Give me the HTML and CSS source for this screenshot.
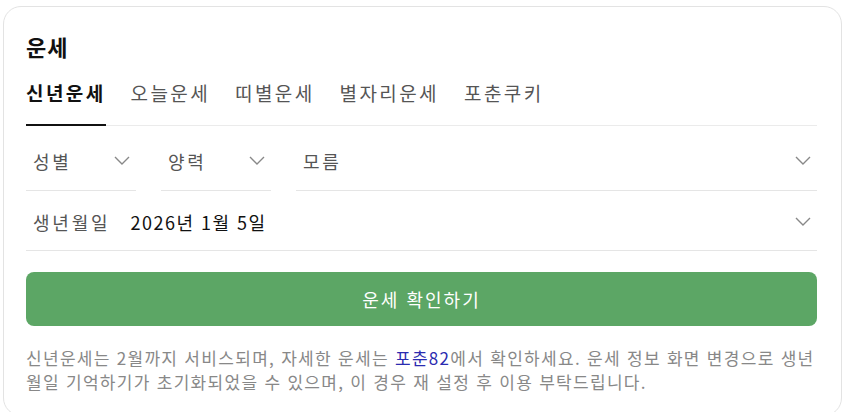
FILE: index.html
```html
<!DOCTYPE html>
<html lang="ko">
<head>
<meta charset="utf-8">
<link rel="stylesheet" href="styles.css">
</head>
<body>
<section class="card">
  <h2 class="title">운세</h2>
  <nav class="tabs">
    <a class="tab active">신년운세</a>
    <a class="tab">오늘운세</a>
    <a class="tab">띠별운세</a>
    <a class="tab">별자리운세</a>
    <a class="tab">포춘쿠키</a>
  </nav>
  <div class="row selects">
    <div class="select short"><span class="label">성별</span><svg class="chev" viewBox="0 0 16 9"><path d="M1 1l7 7 7-7"/></svg></div>
    <div class="select short"><span class="label">양력</span><svg class="chev" viewBox="0 0 16 9"><path d="M1 1l7 7 7-7"/></svg></div>
    <div class="select wide"><span class="label">모름</span><svg class="chev" viewBox="0 0 16 9"><path d="M1 1l7 7 7-7"/></svg></div>
  </div>
  <div class="row birth">
    <div class="select wide"><span class="label">생년월일</span><span class="value">2026년 1월 5일</span><svg class="chev" viewBox="0 0 16 9"><path d="M1 1l7 7 7-7"/></svg></div>
  </div>
  <button class="btn">운세 확인하기</button>
  <p class="note">신년운세는 2월까지 서비스되며, 자세한 운세는 <a class="link">포춘82</a>에서 확인하세요. 운세 정보 화면 변경으로 생년월일 기억하기가 초기화되었을 수 있으며, 이 경우 재 설정 후 이용 부탁드립니다.</p>
</section>
</body>
</html>
```

FILE: styles.css
```css
html, body {
  margin: 0;
  padding: 0;
  background: #fff;
}
body {
  font-family: "Noto Sans CJK KR", "Noto Sans", sans-serif;
  color: #222;
}
.card {
  box-sizing: border-box;
  margin: 6px 0 0 3px;
  width: 839px;
  height: 410px;
  border: 1px solid #e3e3e3;
  border-radius: 18px;
  padding: 0 24px 0 22px;
}
.title {
  margin: 0;
  padding-top: 23px;
  height: 32px;
  font-size: 22px;
  line-height: 32px;
  font-weight: 700;
  color: #111;
  letter-spacing: 1px;
}
.tabs {
  display: flex;
  gap: 25px;
  margin-top: 14px;
  border-bottom: 1px solid #ebebeb;
}
.tab {
  font-size: 19px;
  line-height: 28px;
  padding: 3px 0 17px;
  color: #555;
  letter-spacing: 2.4px;
  margin-bottom: -1px;
  border-bottom: 2px solid transparent;
}
.tab.active {
  color: #111;
  font-weight: 700;
  border-bottom-color: #111;
}
.row {
  display: flex;
  gap: 25px;
}
.select {
  box-sizing: border-box;
  display: flex;
  align-items: center;
  border-bottom: 1px solid #e5e5e5;
  padding: 0 6px 0 7px;
  font-size: 18px;
  color: #555;
  letter-spacing: 2.8px;
}
.selects .select {
  height: 65px;
  padding-top: 5px;
}
.birth .select {
  height: 60px;
  padding-top: 2px;
}
.short { width: 110px; }
.wide { flex: 1; }
.label { flex: none; }
.value {
  margin-left: 20px;
  color: #111;
  letter-spacing: 1.5px;
  flex: 1;
}
.chev {
  flex: none;
  width: 16px;
  height: 9px;
  margin-left: auto;
  fill: none;
  stroke: #888;
  stroke-width: 1.4;
}
.btn {
  display: block;
  width: 100%;
  height: 54px;
  margin-top: 21px;
  border: 0;
  border-radius: 8px;
  background: #5ca665;
  color: #fff;
  font-family: inherit;
  font-size: 18px;
  letter-spacing: 2px;
}
.note {
  margin: 20px 0 0;
  font-size: 17px;
  line-height: 24px;
  color: #888;
  letter-spacing: 1.3px;
}
.link { color: #2b2bb0; }
```
